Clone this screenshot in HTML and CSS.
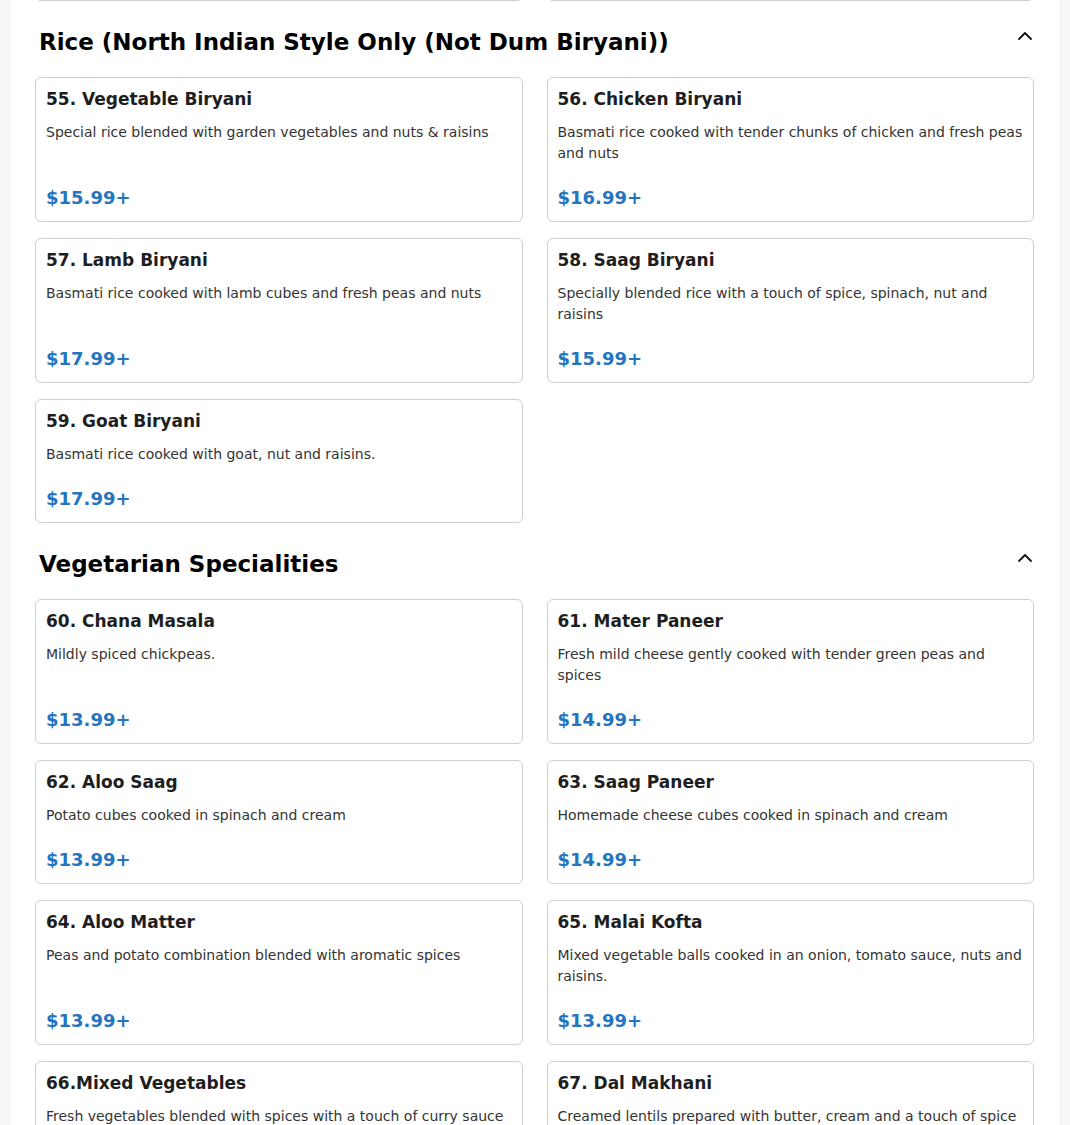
FILE: index.html
```html
<!DOCTYPE html>
<html lang="en">
<head>
<meta charset="utf-8">
<title>Menu</title>
<link rel="stylesheet" href="styles.css">
</head>
<body>
<main class="page">
  <div class="grid tail">
    <div class="card-tail"></div>
    <div class="card-tail"></div>
  </div>

  <section class="section">
    <div class="section-head">
      <h2 class="section-title">Rice (North Indian Style Only (Not Dum Biryani))</h2>
      <button class="toggle" aria-label="Collapse">
        <svg width="16" height="16" viewBox="0 0 16 16"><polyline points="2,11 8,5 14,11" fill="none" stroke="#111" stroke-width="1.8" stroke-linecap="round" stroke-linejoin="round"/></svg>
      </button>
    </div>
    <div class="grid">
      <article class="card">
        <h3 class="card-title">55. Vegetable Biryani</h3>
        <p class="card-desc">Special rice blended with garden vegetables and nuts &amp; raisins</p>
        <div class="card-price">$15.99+</div>
      </article>
      <article class="card">
        <h3 class="card-title">56. Chicken Biryani</h3>
        <p class="card-desc">Basmati rice cooked with tender chunks of chicken and fresh peas and nuts</p>
        <div class="card-price">$16.99+</div>
      </article>
      <article class="card">
        <h3 class="card-title">57. Lamb Biryani</h3>
        <p class="card-desc">Basmati rice cooked with lamb cubes and fresh peas and nuts</p>
        <div class="card-price">$17.99+</div>
      </article>
      <article class="card">
        <h3 class="card-title">58. Saag Biryani</h3>
        <p class="card-desc">Specially blended rice with a touch of spice, spinach, nut and raisins</p>
        <div class="card-price">$15.99+</div>
      </article>
      <article class="card">
        <h3 class="card-title">59. Goat Biryani</h3>
        <p class="card-desc">Basmati rice cooked with goat, nut and raisins.</p>
        <div class="card-price">$17.99+</div>
      </article>
    </div>
  </section>

  <section class="section">
    <div class="section-head">
      <h2 class="section-title">Vegetarian Specialities</h2>
      <button class="toggle" aria-label="Collapse">
        <svg width="16" height="16" viewBox="0 0 16 16"><polyline points="2,11 8,5 14,11" fill="none" stroke="#111" stroke-width="1.8" stroke-linecap="round" stroke-linejoin="round"/></svg>
      </button>
    </div>
    <div class="grid">
      <article class="card">
        <h3 class="card-title">60. Chana Masala</h3>
        <p class="card-desc">Mildly spiced chickpeas.</p>
        <div class="card-price">$13.99+</div>
      </article>
      <article class="card">
        <h3 class="card-title">61. Mater Paneer</h3>
        <p class="card-desc">Fresh mild cheese gently cooked with tender green peas and spices</p>
        <div class="card-price">$14.99+</div>
      </article>
      <article class="card">
        <h3 class="card-title">62. Aloo Saag</h3>
        <p class="card-desc">Potato cubes cooked in spinach and cream</p>
        <div class="card-price">$13.99+</div>
      </article>
      <article class="card">
        <h3 class="card-title">63. Saag Paneer</h3>
        <p class="card-desc">Homemade cheese cubes cooked in spinach and cream</p>
        <div class="card-price">$14.99+</div>
      </article>
      <article class="card">
        <h3 class="card-title">64. Aloo Matter</h3>
        <p class="card-desc">Peas and potato combination blended with aromatic spices</p>
        <div class="card-price">$13.99+</div>
      </article>
      <article class="card">
        <h3 class="card-title">65. Malai Kofta</h3>
        <p class="card-desc">Mixed vegetable balls cooked in an onion, tomato sauce, nuts and raisins.</p>
        <div class="card-price">$13.99+</div>
      </article>
      <article class="card">
        <h3 class="card-title">66.Mixed Vegetables</h3>
        <p class="card-desc">Fresh vegetables blended with spices with a touch of curry sauce</p>
        <div class="card-price">$13.99+</div>
      </article>
      <article class="card">
        <h3 class="card-title">67. Dal Makhani</h3>
        <p class="card-desc">Creamed lentils prepared with butter, cream and a touch of spice</p>
        <div class="card-price">$13.99+</div>
      </article>
    </div>
  </section>
</main>
</body>
</html>
```

FILE: styles.css
```css
* { box-sizing: border-box; }

html, body {
  margin: 0;
  padding: 0;
  background: #f7f7f7;
  font-family: "DejaVu Sans", "Liberation Sans", sans-serif;
  color: #222;
}

.page {
  margin: 0 11px;
  background: #ffffff;
  padding: 0 25px 40px 24px;
  min-height: 1125px;
}

.grid {
  display: grid;
  grid-template-columns: 1fr 1fr;
  column-gap: 24px;
  row-gap: 16px;
}

.tail {
  margin-top: -6px;
}

.card-tail {
  height: 7px;
  border: 1px solid #cfcfcf;
  border-top: none;
  border-radius: 0 0 6px 6px;
}

.section {
  margin-top: 27px;
}

.section-head {
  display: flex;
  justify-content: space-between;
  align-items: flex-start;
  padding-left: 4px;
  margin-bottom: 21px;
}

.section-title {
  margin: 0;
  font-size: 23px;
  line-height: 28px;
  font-weight: 700;
  color: #000;
}

.toggle {
  background: none;
  border: none;
  padding: 0;
  margin: 0 1px 0 0;
  width: 16px;
  height: 16px;
  display: flex;
}

.card {
  display: flex;
  flex-direction: column;
  border: 1px solid #cfcfcf;
  border-radius: 6px;
  padding: 10px 10px 12px;
  background: #fff;
}

.card-title {
  margin: 0 0 12px;
  font-size: 17px;
  line-height: 22px;
  font-weight: 700;
  color: #1e1e1e;
}

.card-desc {
  margin: 0 0 23px;
  font-size: 14px;
  line-height: 21px;
  color: #333;
}

.card-price {
  margin-top: auto;
  font-size: 18px;
  line-height: 22px;
  font-weight: 700;
  color: #2474c0;
}
```
